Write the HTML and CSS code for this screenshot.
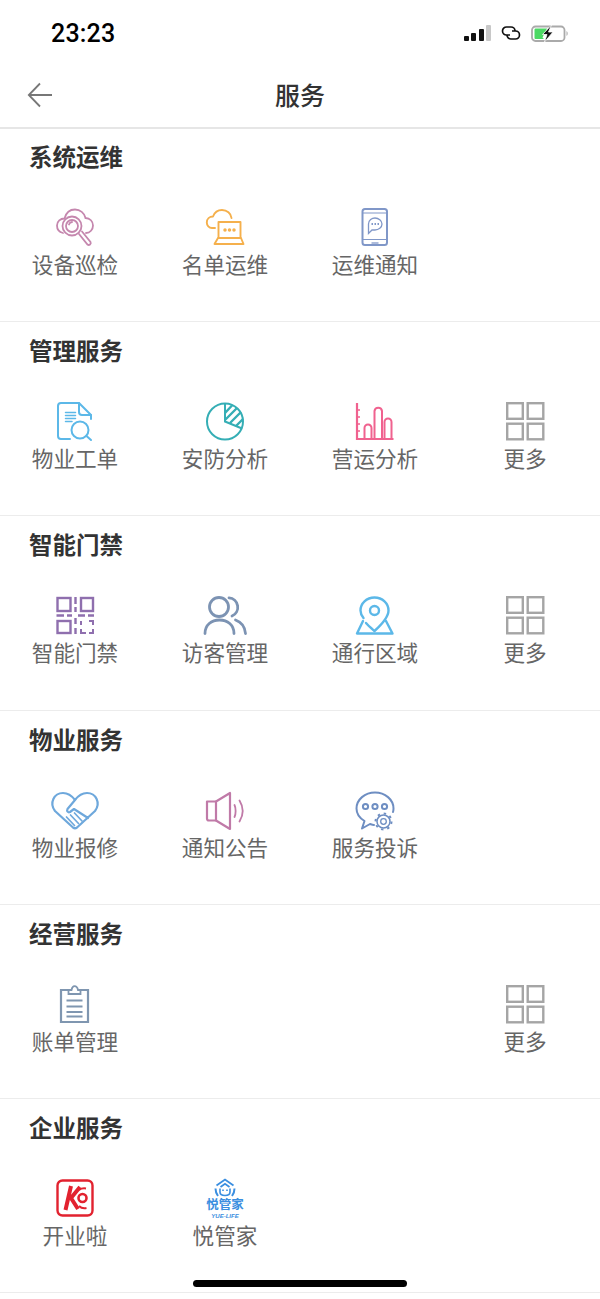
FILE: index.html
```html
<!DOCTYPE html>
<html lang="zh-CN">
<head>
  <meta charset="UTF-8">
  <meta name="viewport" content="width=device-width, initial-scale=1.0">
  <title>服务</title>
  <link rel="stylesheet" href="styles.css">
</head>
<body>
  <div class="status-bar">
    <span class="time">23:23</span>
    <div class="status-icons">
      <div class="signal">
        <i class="bar-1"></i><i class="bar-2"></i><i class="bar-3"></i><i class="bar-4"></i>
      </div>
      <svg class="link-icon" width="20" height="14" viewBox="0 0 20 14" fill="none" stroke="#111" stroke-width="1.700">
        <path d="M9 9H5.500a4 4 0 0 1 0-8H10a4 4 0 0 1 4 4"/>
        <path d="M11 5h3.500a4 4 0 0 1 0 8H10a4 4 0 0 1-4-4"/>
      </svg>
      <svg class="battery" width="38" height="17" viewBox="0 0 38 17">
        <rect x="1" y="1.500" width="32.500" height="14.500" rx="3.500" fill="none" stroke="#aaa" stroke-width="1.800"/>
        <path d="M4.500 3.500H16L11.500 12.500 13 14H4.500a1 1 0 0 1-1-1V4.500a1 1 0 0 1 1-1Z" fill="#4cd964"/>
        <path d="M20.500 0 11.500 9.500H16L13.500 17 22 7H17.500Z" fill="#111" stroke="#fff" stroke-width=".8"/>
        <path d="M35.500 6v5a3 3 0 0 0 1.200-2.500A3 3 0 0 0 35.500 6Z" fill="#aaa"/>
      </svg>
    </div>
  </div>

  <header class="nav">
    <svg class="back" width="26" height="26" viewBox="0 0 26 26" fill="none" stroke="#777" stroke-width="1.800">
      <path d="M25 13H2M13 1.500 1.800 13 13 24.500"/>
    </svg>
    <h1>服务</h1>
  </header>

  <section class="group">
    <h2>系统运维</h2>
    <div class="grid">
      <div class="item">
        <svg class="icon" viewBox="0 0 38 38" fill="none" stroke="#c587ae" stroke-width="1.800" stroke-linecap="round">
          <path d="M7 25C3 24 1 21 1 17.500 1 13 4.500 10.500 8.500 10.500 10 5 14 1.500 19 1.500 24 1.500 28.500 5 29.500 10 34 10 37 13.500 37 17.500 37 21.500 34 25 30 25"/>
          <circle cx="16" cy="18" r="9.500" fill="#fff"/>
          <circle cx="16" cy="18" r="6"/>
          <path d="M13 16.500a3.500 3.500 0 0 1 3-2.500"/>
          <path d="M23 26 31.500 36.500a2 2 0 0 0 3-2.500L26 23.500"/>
        </svg>
        <span>设备巡检</span>
      </div>
      <div class="item">
        <svg class="icon" viewBox="0 0 38 38" fill="none" stroke="#f5b04c" stroke-width="1.900" stroke-linecap="round" stroke-linejoin="round">
          <path d="M9 20H6C3 20 .8 17.500.8 14.500.8 11 3.500 8.500 7 8.500 8.500 4.500 12 2 16 2 21 2 25 5.500 25.500 10"/>
          <rect x="12.500" y="14" width="22" height="16" fill="#fff"/>
          <path d="M12 30 8.500 36H37.500L35 30"/>
          <circle cx="19" cy="22" r=".8"/>
          <circle cx="23.500" cy="22" r=".8"/>
          <circle cx="28" cy="22" r=".8"/>
        </svg>
        <span>名单运维</span>
      </div>
      <div class="item">
        <svg class="icon" viewBox="0 0 38 38" fill="none" stroke="#8097c8" stroke-width="2">
          <rect x="6.500" y="1" width="24.500" height="36" rx="2.500"/>
          <path d="M7 5H31M7 31.500H31" stroke-width="1"/>
          <path d="M15.500 35H22.500" stroke-width="1.300"/>
          <path d="M12.500 25.500V16C12.500 12 16 10 19 10 22.500 10 26 12.500 26 16 26 19.500 22.500 22 19 22H16Z" stroke-width="1.300"/>
          <path d="M15.500 16H17M18.500 16H20M21.500 16H23" stroke-width="2"/>
        </svg>
        <span>运维通知</span>
      </div>
    </div>
  </section>

  <section class="group">
    <h2>管理服务</h2>
    <div class="grid">
      <div class="item">
        <svg class="icon" viewBox="0 0 38 38" fill="none" stroke="#5cb8e8" stroke-width="2" stroke-linecap="round" stroke-linejoin="round">
          <path d="M14 37H5Q2 37 2 34V4Q2 1 5 1H23L35 13V17"/>
          <path d="M23 1V10Q23 13 26 13H35"/>
          <path d="M9.500 10.500H19.500M9.500 13.500H19.500M9.500 16.500H19.500M9.500 19.500H16" stroke-width="1.500"/>
          <circle cx="24" cy="28" r="8.500"/>
          <path d="M30.500 34 35 38"/>
        </svg>
        <span>物业工单</span>
      </div>
      <div class="item">
        <svg class="icon" viewBox="0 0 38 38" fill="none" stroke="#35aeb5" stroke-width="2">
          <circle cx="19" cy="19.500" r="18"/>
          <path d="M19 1.500V19.500L36 26.500"/>
          <path d="M19 11 26 3.500M19 18 31 6M24 21 35 10M30 24 37 17" stroke-width="2.400"/>
        </svg>
        <span>安防分析</span>
      </div>
      <div class="item">
        <svg class="icon" viewBox="0 0 38 38" fill="none" stroke="#f0628f" stroke-width="2">
          <path d="M1 1V37H37.500" stroke-width="2.200"/>
          <path d="M1 8H4M1 15H4M1 22H4M1 29H4" stroke-width="1.600"/>
          <path d="M8.500 37V26A3.500 3.500 0 0 1 15.500 26V37"/>
          <path d="M18.500 37V9A3.800 3.800 0 0 1 26 9V37"/>
          <path d="M28.500 37V20A3.500 3.500 0 0 1 35.500 20V37"/>
        </svg>
        <span>营运分析</span>
      </div>
      <div class="item">
        <svg class="icon" viewBox="0 0 38 38" fill="none" stroke="#a5a5a5" stroke-width="2.400">
          <rect x="1.200" y="1.200" width="15.600" height="15.600"/>
          <rect x="21.700" y="1.200" width="15.600" height="15.600"/>
          <rect x="1.200" y="21.700" width="15.600" height="15.600"/>
          <rect x="21.700" y="21.700" width="15.600" height="15.600"/>
        </svg>
        <span>更多</span>
      </div>
    </div>
  </section>

  <section class="group">
    <h2>智能门禁</h2>
    <div class="grid">
      <div class="item">
        <svg class="icon" viewBox="0 0 38 38" fill="none" stroke="#8f6fae" stroke-width="2.400">
          <rect x="1.500" y="2" width="13" height="13"/>
          <rect x="25" y="2" width="12" height="13"/>
          <rect x="1.500" y="25" width="13" height="12"/>
          <path d="M19.500 1V8M19.500 11V16M19.500 22V28M19.500 32V38"/>
          <path d="M.5 19.500H8M11 19.500H16M22 19.500H29M32 19.500H38"/>
          <path d="M25 25V29M25 33V37H30M33 37H37V33M37 29V25H33" stroke-width="2"/>
        </svg>
        <span>智能门禁</span>
      </div>
      <div class="item">
        <svg class="icon" viewBox="0 0 38 38" fill="none" stroke="#7c93b3" stroke-width="2.800" stroke-linecap="round">
          <circle cx="13" cy="11" r="9.500"/>
          <path d="M-1 37.500C-1 29 5.500 24 13.500 24 21.500 24 28 29 28 37.500"/>
          <path d="M23 1.800A9.500 9.500 0 0 1 26 20"/>
          <path d="M29.500 24C35 26 39 31 39.500 37.500"/>
        </svg>
        <span>访客管理</span>
      </div>
      <div class="item">
        <svg class="icon" viewBox="0 0 38 38" fill="none" stroke="#5cb8e8" stroke-width="2.400" stroke-linecap="round" stroke-linejoin="round">
          <path d="M7.500 22C5.500 19.500 4.500 17.500 4.500 14.500 4.500 7.500 10.500 1.500 18.500 1.500 26.500 1.500 32.500 7.500 32.500 14.500 32.500 22 24 30 18.500 35 15 32 12 29.500 10 27"/>
          <circle cx="18.500" cy="14.500" r="4.500"/>
          <path d="M7 25 1 37.500H36.500L30 25"/>
        </svg>
        <span>通行区域</span>
      </div>
      <div class="item">
        <svg class="icon" viewBox="0 0 38 38" fill="none" stroke="#a5a5a5" stroke-width="2.400">
          <rect x="1.200" y="1.200" width="15.600" height="15.600"/>
          <rect x="21.700" y="1.200" width="15.600" height="15.600"/>
          <rect x="1.200" y="21.700" width="15.600" height="15.600"/>
          <rect x="21.700" y="21.700" width="15.600" height="15.600"/>
        </svg>
        <span>更多</span>
      </div>
    </div>
  </section>

  <section class="group">
    <h2>物业服务</h2>
    <div class="grid">
      <div class="item">
        <svg class="icon" viewBox="0 0 38 38" fill="none" stroke="#6ea8dc" stroke-width="2.200" stroke-linecap="round" stroke-linejoin="round">
          <path d="M19 9C16 5 12 2 7 2-2 2-7 12-1 20L17 36.500Q19 38 21 36.500L39 20C45 12 40 2 31 2 26 2 22 5 19 9L11.500 18C10.500 20 12 22 14 21L18 18 32 27"/>
          <path d="M10.500 26 18.500 34.500M14.500 24 22.500 32.500M18.500 22 26 30" stroke-width="1.700"/>
        </svg>
        <span>物业报修</span>
      </div>
      <div class="item">
        <svg class="icon" viewBox="0 0 38 38" fill="none" stroke="#c07aa8" stroke-width="2.200" stroke-linejoin="round" stroke-linecap="round">
          <path d="M1 10.500H10V29.500H3Q1 29.500 1 27.500Z"/>
          <path d="M10 10.500 24 2V38L10 29.500"/>
          <path d="M28.500 14C30 17 30 23 28.500 26" stroke-width="1.800"/>
          <path d="M33.500 9.500C37.500 16 37.500 24 33.500 30.500" stroke-width="1.800"/>
        </svg>
        <span>通知公告</span>
      </div>
      <div class="item">
        <svg class="icon" viewBox="0 0 38 38" fill="none" stroke="#6e8ec2" stroke-width="2" stroke-linecap="round" stroke-linejoin="round">
          <path d="M18 34C17 34 15.500 33.500 14 33L6 37.500 8.500 30C3.500 27 .5 22.500 .5 17.500.5 8.500 9 1.500 19 1.500 29 1.500 37.500 8.500 37.500 17.500 37.500 19 37.300 20 37 21"/>
          <circle cx="9.500" cy="15.500" r="2.600"/>
          <circle cx="19" cy="15.500" r="2.600"/>
          <circle cx="28.500" cy="15.500" r="2.600"/>
          <circle cx="27.500" cy="30.500" r="6.500" stroke-width="1.500" fill="#fff"/>
          <circle cx="27.500" cy="30.500" r="8" stroke-width="2" stroke-dasharray="2.400 3.880" stroke-linecap="butt"/>
          <circle cx="27.500" cy="30.500" r="2.800" stroke-width="1.300"/>
        </svg>
        <span>服务投诉</span>
      </div>
    </div>
  </section>

  <section class="group">
    <h2>经营服务</h2>
    <div class="grid">
      <div class="item">
        <svg class="icon" viewBox="0 0 38 38" fill="none" stroke="#7f96b0" stroke-width="2.200">
          <path d="M12.500 5H5V37H32V5H24.500"/>
          <path d="M12.500 9V5H15.500C16 2.500 17 1.200 18.500 1.200 20 1.200 21.500 2.500 22 5H24.500V9Z" stroke-width="1.800"/>
          <path d="M10.500 15.500H26.500M10.500 21.500H26.500M10.500 27H26.500M10.500 31.500H26.500"/>
        </svg>
        <span>账单管理</span>
      </div>
      <div class="item more">
        <svg class="icon" viewBox="0 0 38 38" fill="none" stroke="#a5a5a5" stroke-width="2.400">
          <rect x="1.200" y="1.200" width="15.600" height="15.600"/>
          <rect x="21.700" y="1.200" width="15.600" height="15.600"/>
          <rect x="1.200" y="21.700" width="15.600" height="15.600"/>
          <rect x="21.700" y="21.700" width="15.600" height="15.600"/>
        </svg>
        <span>更多</span>
      </div>
    </div>
  </section>

  <section class="group">
    <h2>企业服务</h2>
    <div class="grid">
      <div class="item">
        <svg class="icon" viewBox="0 0 38 38" fill="none">
          <rect x="1.500" y="1.500" width="35" height="35" rx="5" stroke="#e2222f" stroke-width="2.400"/>
          <path d="M15 7 9.500 31M24 8 15 19 22 30" stroke="#e2222f" stroke-width="4" stroke-linejoin="bevel"/>
          <circle cx="26.500" cy="19" r="4" stroke="#e2222f" stroke-width="2.600"/>
          <path d="M30 9.500C27 9 25 9.500 23 11M23 27C25 29 28 29.500 30.500 29" stroke="#e2222f" stroke-width="2"/>
        </svg>
        <span>开业啦</span>
      </div>
      <div class="item">
        <svg class="icon" viewBox="0 0 38 38" fill="none" stroke="#3a8ee0" stroke-width="1.800">
          <path d="M10.500 6.500 19 .5 27.500 6.500M14.500 8 19 4.800 23.500 8"/>
          <path d="M14 9.500V13C14 15 16 16.500 19 16.500 22 16.500 24 15 24 13V9.500" stroke-width="1.600"/>
          <path d="M17 10.500V12M21 10.500V12" stroke-width="1.600"/>
          <path d="M9.500 9.500C9.500 12.500 10.500 15 12 17M28.500 9.500C28.500 12.500 27.500 15 26 17" stroke-width="2"/>
          <text class="logo-name" x="19" y="29.500" fill="#3a8ee0" stroke="none">悦管家</text>
          <text class="logo-latin" x="19" y="39" fill="#3a8ee0" stroke="none">YUE-LIFE</text>
        </svg>
        <span>悦管家</span>
      </div>
    </div>
  </section>

  <div class="home-indicator"></div>
</body>
</html>
```

FILE: styles.css
```css
* { box-sizing: border-box; }
html, body { margin: 0; padding: 0; }
body {
  width: 600px;
  height: 1299px;
  overflow: hidden;
  position: relative;
  background: #fff;
  font-family: "Noto Sans CJK SC", "Liberation Sans", sans-serif;
}

.status-bar {
  height: 64px;
  display: flex;
  justify-content: space-between;
  align-items: center;
  padding: 2px 31px 0 51px;
}
.time {
  font-family: Roboto, "Liberation Sans", sans-serif;
  font-size: 25px;
  font-weight: 500;
  letter-spacing: 0.200px;
  color: #000;
}
.status-icons { display: flex; align-items: center; gap: 10px; }
.signal { display: flex; align-items: flex-end; gap: 2.500px; height: 16px; }
.signal i { display: block; width: 5px; background: #111; border-radius: 1px; }
.signal .bar-1 { height: 5px; }
.signal .bar-2 { height: 8px; }
.signal .bar-3 { height: 12px; }
.signal .bar-4 { height: 16px; background: #c8c8c8; }

.nav {
  height: 65px;
  margin-bottom: -1px;
  display: flex;
  align-items: center;
  justify-content: center;
  position: relative;
  border-bottom: 2px solid #e6e6e6;
  padding-bottom: 3px;
}
.nav h1 {
  margin: 0;
  font-size: 25px;
  font-weight: 500;
  color: #333;
}
.back { position: absolute; left: 27px; top: 18px; }

.group {
  height: 194.200px;
  padding-top: 13px;
  border-bottom: 1px solid #ececec;
}
.group h2 {
  margin: 0 0 37px;
  padding-left: 29px;
  font-size: 23.500px;
  line-height: 30px;
  font-weight: 700;
  color: #333;
}
.grid { display: grid; grid-template-columns: repeat(4, 150px); }
.item { display: flex; flex-direction: column; align-items: center; }
.item span {
  margin-top: 3px;
  font-size: 21.600px;
  line-height: 30px;
  color: #666;
}
.more { grid-column: 4; }
.icon { display: block; width: 38px; height: 38px; overflow: visible; }

.logo-name {
  font-family: "Noto Sans CJK SC", sans-serif;
  font-size: 12.500px;
  font-weight: 700;
  text-anchor: middle;
}
.logo-latin {
  font-family: "Liberation Sans", sans-serif;
  font-size: 6px;
  font-weight: 700;
  font-style: italic;
  text-anchor: middle;
}

.home-indicator {
  position: absolute;
  left: 193px;
  top: 1280px;
  width: 214px;
  height: 7px;
  border-radius: 4px;
  background: #000;
}
```
